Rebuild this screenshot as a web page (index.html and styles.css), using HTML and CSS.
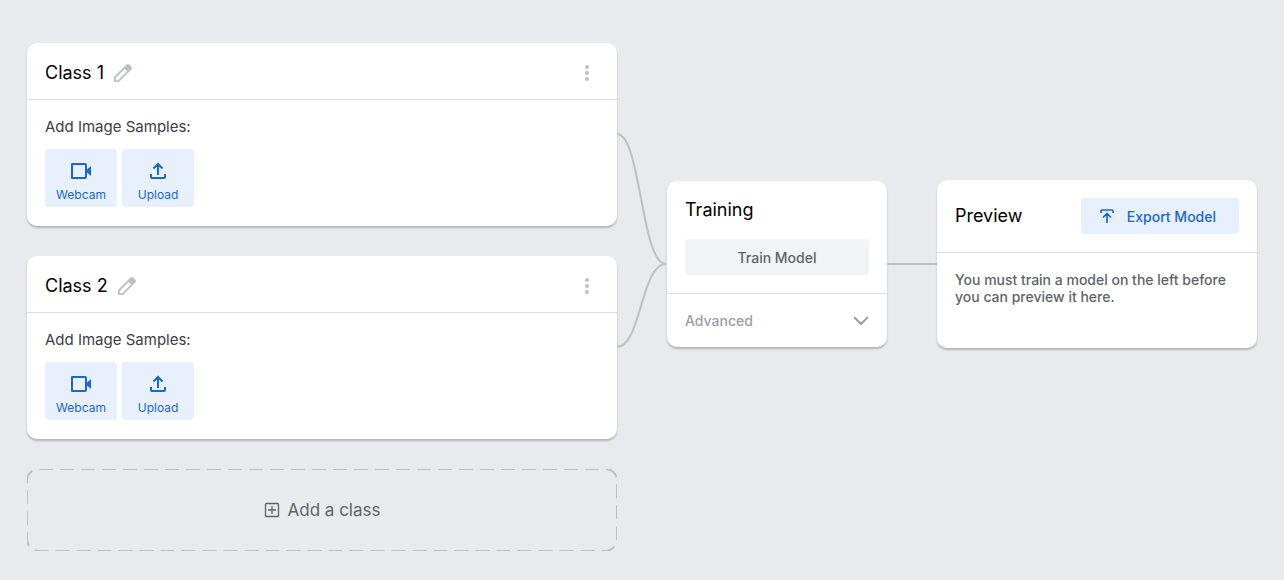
FILE: index.html
```html
<!DOCTYPE html>
<html lang="en">
<head>
    <meta charset="UTF-8">
    <meta name="viewport" content="width=device-width, initial-scale=1.0">
    <title>Image Model</title>
    <link rel="stylesheet" href="styles.css">
</head>
<body>
    <main class="workspace">
        <div class="classes">
            <section class="card">
                <header class="class-header">
                    <h2 class="title">Class 1</h2>
                    <button class="icon-btn" aria-label="Rename class">
                        <svg width="20" height="20" viewBox="0 0 20 20"><path fill-rule="evenodd" d="M1 14 13.400 1.600q1.400-1.400 2.800 0l2.200 2.200q1.400 1.400 0 2.800L6 19H1zM2.800 14.900v2.300h2.300L14 8.300 11.700 6z"/></svg>
                    </button>
                    <button class="icon-btn menu" aria-label="Class options">
                        <svg width="4" height="16" viewBox="0 0 4 16"><circle cx="2" cy="2" r="2"/><circle cx="2" cy="8" r="2"/><circle cx="2" cy="14" r="2"/></svg>
                    </button>
                </header>
                <div class="class-body">
                    <p class="label">Add Image Samples:</p>
                    <div class="samples">
                        <button class="sample-btn">
                            <svg width="24" height="20" viewBox="0 0 24 20"><path fill-rule="evenodd" d="M3 2h13q2 0 2 2v4.500L22 5v10l-4-3.500V16q0 2-2 2H3q-1 0-1-1V3q0-1 1-1zM4 4v12h12V4z"/></svg>
                            Webcam
                        </button>
                        <button class="sample-btn">
                            <svg width="24" height="20" viewBox="0 0 24 20"><path d="M5 13v3q0 1 1 1h12q1 0 1-1v-3M12 14V4M7.500 7.500 12 3l4.500 4.500" fill="none" stroke="currentColor" stroke-width="2"/></svg>
                            Upload
                        </button>
                    </div>
                </div>
            </section>

            <section class="card">
                <header class="class-header">
                    <h2 class="title">Class 2</h2>
                    <button class="icon-btn" aria-label="Rename class">
                        <svg width="20" height="20" viewBox="0 0 20 20"><path fill-rule="evenodd" d="M1 14 13.400 1.600q1.400-1.400 2.800 0l2.200 2.200q1.400 1.400 0 2.800L6 19H1zM2.800 14.900v2.300h2.300L14 8.300 11.700 6z"/></svg>
                    </button>
                    <button class="icon-btn menu" aria-label="Class options">
                        <svg width="4" height="16" viewBox="0 0 4 16"><circle cx="2" cy="2" r="2"/><circle cx="2" cy="8" r="2"/><circle cx="2" cy="14" r="2"/></svg>
                    </button>
                </header>
                <div class="class-body">
                    <p class="label">Add Image Samples:</p>
                    <div class="samples">
                        <button class="sample-btn">
                            <svg width="24" height="20" viewBox="0 0 24 20"><path fill-rule="evenodd" d="M3 2h13q2 0 2 2v4.500L22 5v10l-4-3.500V16q0 2-2 2H3q-1 0-1-1V3q0-1 1-1zM4 4v12h12V4z"/></svg>
                            Webcam
                        </button>
                        <button class="sample-btn">
                            <svg width="24" height="20" viewBox="0 0 24 20"><path d="M5 13v3q0 1 1 1h12q1 0 1-1v-3M12 14V4M7.500 7.500 12 3l4.500 4.500" fill="none" stroke="currentColor" stroke-width="2"/></svg>
                            Upload
                        </button>
                    </div>
                </div>
            </section>

            <button class="add-class">
                <svg class="dashes" aria-hidden="true"><rect width="100%" height="100%" rx="12"/></svg>
                <svg width="16" height="16" viewBox="0 0 16 16"><path d="M2.500 1.500h11q1 0 1 1v11q0 1-1 1h-11q-1 0-1-1v-11q0-1 1-1zM8 4v8M4 8h8" fill="none" stroke="currentColor" stroke-width="1.300"/></svg>
                Add a class
            </button>
        </div>

        <svg class="link-lines" width="50" height="216" viewBox="0 0 50 216"><path d="M0 1C24 1 24 131 49 131M0 214C24 214 24 131 49 131"/></svg>

        <section class="card training">
            <div class="training-top">
                <h2 class="title">Training</h2>
                <button class="train-btn">Train Model</button>
            </div>
            <button class="advanced">
                Advanced
                <svg width="16" height="10" viewBox="0 0 16 10"><path d="M1 1l7 7 7-7" fill="none" stroke="currentColor" stroke-width="2"/></svg>
            </button>
        </section>

        <div class="link-line"></div>

        <section class="card preview">
            <header class="preview-header">
                <h2 class="title">Preview</h2>
                <button class="export-btn">
                    <svg width="16" height="16" viewBox="0 0 16 16"><path d="M2 5V3q0-1 1-1h10q1 0 1 1v2M8 15V6M4 9.500l4-4 4 4" fill="none" stroke="currentColor" stroke-width="1.700"/></svg>
                    Export Model
                </button>
            </header>
            <p class="preview-text">You must train a model on the left before you can preview it here.</p>
        </section>
    </main>
</body>
</html>
```
FILE: styles.css
```css
* {
    box-sizing: border-box;
}

body {
    margin: 0;
    font-family: Inter, Roboto, sans-serif;
    background-color: #e8eaed;
    color: #000;
}

button {
    border: none;
    padding: 0;
    background: none;
    font-family: inherit;
    cursor: pointer;
}

svg {
    display: block;
    flex: none;
    fill: currentColor;
}

.workspace {
    display: grid;
    grid-template-columns: 1fr 50px 220px 50px 320px;
    align-items: start;
    padding: 43px 27px 29px;
}

.classes {
    display: flex;
    flex-direction: column;
    gap: 30px;
}

.card {
    border-radius: 10px;
    background-color: #fff;
    box-shadow: 0 2px 2px rgba(60, 64, 67, 0.3);
}

.title {
    margin: 0;
    font-size: 18px;
    line-height: 22px;
    font-weight: 400;
}

.class-header {
    display: flex;
    align-items: center;
    gap: 9px;
    padding: 19px 28px 15px 18px;
    border-bottom: 1px solid #dadce0;
}

.icon-btn {
    color: #bdc1c6;
}

.menu {
    margin-left: auto;
}

.class-body {
    padding: 18px 18px 19px;
}

.label {
    margin: 0 0 13px;
    font-size: 15px;
    line-height: 18px;
    color: #3c4043;
}

.samples {
    display: flex;
    gap: 5px;
}

.sample-btn {
    display: flex;
    flex-direction: column;
    align-items: center;
    gap: 6px;
    width: 72px;
    height: 58px;
    padding-top: 12px;
    border-radius: 4px;
    background-color: #e8f0fe;
    color: #1967d2;
    font-size: 12px;
    line-height: 16px;
}

.add-class {
    position: relative;
    display: flex;
    justify-content: center;
    align-items: center;
    gap: 8px;
    height: 82px;
    color: #5f6368;
    font-size: 17px;
}

.dashes {
    position: absolute;
    inset: 0;
    width: 100%;
    height: 100%;
}

.dashes rect {
    fill: none;
    stroke: #bdc1c6;
    stroke-width: 2;
    stroke-dasharray: 14 7;
}

.link-lines {
    margin-top: 90px;
}

.link-lines path {
    fill: none;
    stroke: #bdc1c6;
    stroke-width: 2;
}

.training {
    margin-top: 138px;
}

.training-top {
    padding: 18px;
    border-bottom: 1px solid #dadce0;
}

.train-btn {
    width: 100%;
    height: 36px;
    margin-top: 18px;
    border-radius: 4px;
    background-color: #f1f3f4;
    color: #5f6368;
    font-size: 14px;
    font-weight: 500;
}

.advanced {
    display: flex;
    justify-content: space-between;
    align-items: center;
    width: 100%;
    height: 53px;
    padding: 0 18px;
    color: #9aa0a6;
    font-size: 14px;
    font-weight: 500;
}

.link-line {
    height: 2px;
    margin-top: 220px;
    background-color: #bdc1c6;
}

.preview {
    min-height: 168px;
    margin-top: 137px;
}

.preview-header {
    display: flex;
    justify-content: space-between;
    align-items: center;
    padding: 18px;
    border-bottom: 1px solid #dadce0;
}

.export-btn {
    display: flex;
    align-items: center;
    gap: 12px;
    height: 36px;
    padding: 0 23px 0 18px;
    border-radius: 4px;
    background-color: #e8f0fe;
    color: #1967d2;
    font-size: 14px;
    font-weight: 500;
}

.preview-text {
    margin: 18px;
    color: #5f6368;
    font-size: 14px;
    line-height: 17px;
    font-weight: 500;
}
```
